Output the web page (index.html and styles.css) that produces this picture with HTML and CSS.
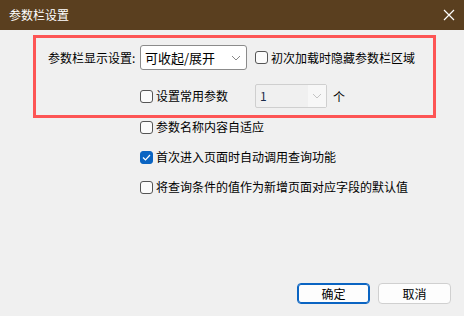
FILE: index.html
```html
<!DOCTYPE html>
<html>
<head>
    <title>参数栏设置</title>
    <meta charset="UTF-8">
    <link rel="stylesheet" href="styles.css">
</head>
<body>
    <div class="dialog">
        <div class="titlebar">
            <span class="title">参数栏设置</span>
            <svg class="close" width="12" height="12" viewBox="0 0 12 12">
                <path d="M1 1 L11 11 M11 1 L1 11" stroke="#fff" stroke-width="1.2" fill="none"/>
            </svg>
        </div>

        <div class="content">
            <div class="highlight">
                <div class="grid">
                    <span class="label">参数栏显示设置:</span>
                    <div class="select">
                        <span>可收起/展开</span>
                        <svg class="chevron" width="10" height="6" viewBox="0 0 10 6">
                            <path d="M1 1 L5 5 L9 1" stroke="#888" stroke-width="1" fill="none"/>
                        </svg>
                    </div>
                    <label class="check"><span class="box"></span>初次加载时隐藏参数栏区域</label>

                    <span></span>
                    <label class="check"><span class="box"></span>设置常用参数</label>
                    <div class="count">
                        <div class="combo">
                            <span class="combo-value">1</span>
                            <span class="combo-btn">
                                <svg width="10" height="6" viewBox="0 0 10 6">
                                    <path d="M1 1 L5 5 L9 1" stroke="#c4c4c4" stroke-width="1" fill="none"/>
                                </svg>
                            </span>
                        </div>
                        <span>个</span>
                    </div>
                </div>
            </div>

            <div class="options">
                <label class="check"><span class="box"></span>参数名称内容自适应</label>
                <label class="check"><span class="box checked">
                    <svg width="9" height="7" viewBox="0 0 9 7">
                        <path d="M1 3.5 L3.5 6 L8 1" stroke="#fff" stroke-width="1.2" fill="none"/>
                    </svg>
                </span>首次进入页面时自动调用查询功能</label>
                <label class="check"><span class="box"></span>将查询条件的值作为新增页面对应字段的默认值</label>
            </div>
        </div>

        <div class="footer">
            <button class="btn primary">确定</button>
            <button class="btn">取消</button>
        </div>
    </div>
</body>
</html>
```

FILE: styles.css
```css
body {
    margin: 0;
    font-family: "Noto Sans CJK SC", "Noto Sans", sans-serif;
    font-size: 12px;
    color: #000;
}
.dialog {
    width: 464px;
    height: 316px;
    background: #f0f0f0;
    display: flex;
    flex-direction: column;
}
.titlebar {
    height: 30px;
    background: #5a3f1f;
    color: #fff;
    display: flex;
    align-items: center;
    justify-content: space-between;
    padding: 0 9px;
}
.title {
    font-size: 12px;
    line-height: 16px;
}
.close {
    margin-right: 0;
}
.content {
    flex: 1;
    padding-top: 5px;
}
.highlight {
    box-sizing: border-box;
    width: 403px;
    height: 83px;
    margin-left: 33px;
    border: 3px solid #fd5555;
    padding: 7px 0 0 12px;
}
.grid {
    display: grid;
    grid-template-columns: 92px 115px auto;
    grid-template-rows: 25px 24px;
    row-gap: 14px;
    align-items: center;
}
.label {
    white-space: nowrap;
}
.select {
    box-sizing: border-box;
    width: 107px;
    height: 25px;
    background: #fff;
    border: 1px solid #8b8b8b;
    border-radius: 3px;
    display: flex;
    align-items: center;
    justify-content: space-between;
    padding: 0 5px 0 4px;
    font-size: 13px;
}
.check {
    display: flex;
    align-items: center;
    gap: 3px;
    white-space: nowrap;
    line-height: 18px;
}
.box {
    box-sizing: border-box;
    width: 13px;
    height: 13px;
    border: 1px solid #555;
    border-radius: 3px;
    background: #fbfbfb;
    display: flex;
    align-items: center;
    justify-content: center;
}
.box.checked {
    background: #0a64c2;
    border-color: #0a64c2;
}
.count {
    display: flex;
    align-items: center;
    gap: 6px;
}
.combo {
    box-sizing: border-box;
    width: 72px;
    height: 24px;
    border: 1px solid #cfcfcf;
    border-radius: 2px;
    display: flex;
    background: #f0f0f0;
}
.combo-value {
    flex: 1;
    padding-left: 4px;
    line-height: 22px;
    color: #1a2a4a;
}
.combo-btn {
    width: 18px;
    display: flex;
    align-items: center;
    justify-content: center;
    background: #f7f7f7;
}
.options {
    display: flex;
    flex-direction: column;
    gap: 12px;
    margin-left: 140px;
}
.footer {
    display: flex;
    justify-content: flex-end;
    gap: 8px;
    padding: 0 13px 12px 0;
}
.btn {
    box-sizing: border-box;
    width: 73px;
    height: 21px;
    font-family: inherit;
    font-size: 12px;
    background: #fdfdfd;
    border: 1px solid #d0d0d0;
    border-radius: 4px;
    padding: 0;
}
.primary {
    border-color: #0a64c2;
    box-shadow: inset 0 0 0 1px #0a64c2;
}
```
